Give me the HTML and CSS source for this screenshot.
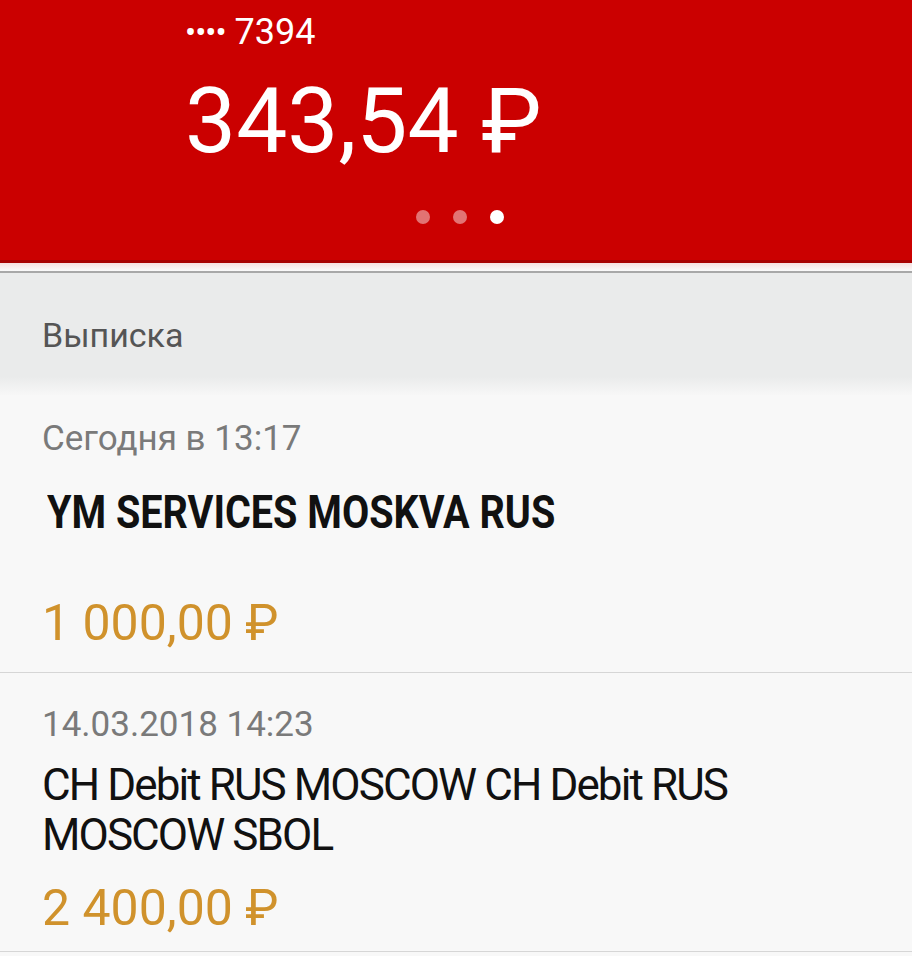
FILE: index.html
```html
<!DOCTYPE html>
<html lang="ru">
<head>
  <meta charset="UTF-8">
  <meta name="viewport" content="width=device-width, initial-scale=1.0">
  <title>Выписка</title>
  <link rel="stylesheet" href="styles.css">
</head>
<body>
  <header class="card">
    <div class="card-number"><span class="mask">••••</span> 7394</div>
    <div class="card-balance">343,54 ₽</div>
    <div class="pager">
      <span class="dot"></span>
      <span class="dot"></span>
      <span class="dot active"></span>
    </div>
  </header>
  <div class="card-edge"></div>

  <div class="section-title">Выписка</div>

  <div class="ops">
    <div class="op">
      <div class="op-date">Сегодня в 13:17</div>
      <div class="op-name op-name-bold"><span>YM SERVICES MOSKVA RUS</span></div>
      <div class="op-sum">1 000,00 ₽</div>
    </div>
    <div class="op">
      <div class="op-date">14.03.2018 14:23</div>
      <div class="op-name">CH Debit RUS MOSCOW CH Debit RUS MOSCOW SBOL</div>
      <div class="op-sum">2 400,00 ₽</div>
    </div>
  </div>
</body>
</html>
```

FILE: styles.css
```css
* { box-sizing: border-box; margin: 0; padding: 0; }

body {
  width: 912px;
  height: 956px;
  font-family: Roboto, "Noto Sans", Arial, sans-serif;
  background-color: #f8f8f8;
  color: #111;
  overflow: hidden;
}

.card {
  height: 260px;
  padding: 12px 0 0 185px;
  background-color: #cb0000;
  color: #fff;
}

.card-number {
  font-size: 36px;
  line-height: 40px;
}

.mask {
  font-size: 33px;
  letter-spacing: -1px;
}

.card-balance {
  margin-top: 18px;
  font-size: 91px;
  line-height: 100px;
}

.pager {
  display: flex;
  justify-content: center;
  gap: 23px;
  margin: 39px 0 0 -185px;
  padding-left: 8px;
}

.dot {
  width: 14px;
  height: 14px;
  border-radius: 50%;
  background-color: rgba(255,255,255,0.45);
}

.dot.active {
  background-color: #fff;
}

.card-edge {
  height: 13px;
  border-top: 3px solid #a80000;
  border-bottom: 2px solid #a8a8a8;
  background: linear-gradient(#f6dede, #fafafa);
}

.section-title {
  height: 122px;
  padding: 42px 0 0 42px;
  font-size: 34px;
  color: #555;
  background: linear-gradient(#eaebeb 85%, #f7f7f7);
}

.op {
  padding: 22px 42px 0;
  border-bottom: 1px solid #d6d6d6;
}

.op + .op {
  padding-top: 30px;
}

.op-date {
  font-size: 35px;
  line-height: 44px;
  color: #7a7a7a;
}

.op-name {
  margin-top: 13px;
  font-size: 44px;
  line-height: 50px;
  letter-spacing: -1.9px;
  color: #111;
}

.op-name-bold {
  margin: 26px 0 0 5px;
  height: 88px;
  font-weight: bold;
  letter-spacing: 0;
}

.op-name-bold span {
  display: inline-block;
  font-size: 46px;
  transform: scaleX(0.86);
  transform-origin: left center;
  white-space: nowrap;
}

.op-sum {
  margin: 18px 0 19px;
  font-size: 50px;
  line-height: 60px;
  color: #d0922c;
}

.op + .op .op-sum {
  margin-bottom: 13px;
}
```
